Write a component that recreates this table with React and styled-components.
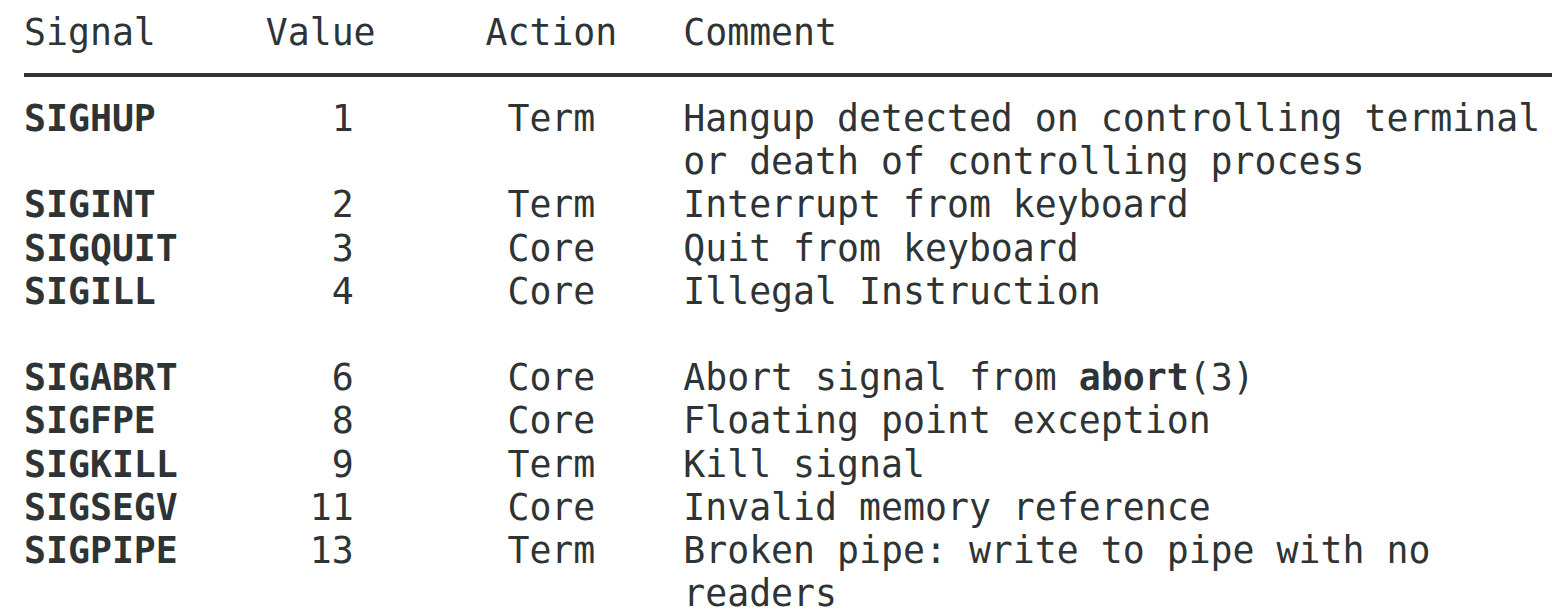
import React from 'react';
import styled, { createGlobalStyle } from 'styled-components';

const GlobalStyle = createGlobalStyle`
  html, body {
    margin: 0;
    padding: 0;
    background: #ffffff;
  }
`;

const Page = styled.div`
  padding: 11px 0 0 24px;
  width: 1528px;
  overflow: hidden;
  font-family: 'DejaVu Sans Mono', 'Liberation Mono', monospace;
  font-size: 36.5px;
  line-height: 43.2px;
  color: #2e3436;
`;

const Table = styled.div`
  display: grid;
  grid-template-columns: 11ch 10ch 9ch 1fr;
`;

const Head = styled.div`
  white-space: pre;
`;

const Rule = styled.div`
  grid-column: 1 / -1;
  height: 4px;
  background: #2e3436;
  margin: 18.4px 0 20.4px;
`;

const Name = styled.div`
  font-weight: bold;
  white-space: pre;
`;

const Value = styled.div`
  text-align: right;
  padding-right: 6ch;
`;

const Action = styled.div`
  text-align: center;
  width: 6ch;
`;

const Comment = styled.div`
  b {
    font-weight: bold;
  }
`;

const Blank = styled.div`
  grid-column: 1 / -1;
  height: 43.2px;
`;

const signals = [
  ['SIGHUP', '1', 'Term', 'Hangup detected on controlling terminal or death of controlling process'],
  ['SIGINT', '2', 'Term', 'Interrupt from keyboard'],
  ['SIGQUIT', '3', 'Core', 'Quit from keyboard'],
  ['SIGILL', '4', 'Core', 'Illegal Instruction'],
  null,
  ['SIGABRT', '6', 'Core', <>Abort signal from <b>abort</b>(3)</>],
  ['SIGFPE', '8', 'Core', 'Floating point exception'],
  ['SIGKILL', '9', 'Term', 'Kill signal'],
  ['SIGSEGV', '11', 'Core', 'Invalid memory reference'],
  ['SIGPIPE', '13', 'Term', 'Broken pipe: write to pipe with no readers'],
];

export default function App() {
  return (
    <>
      <GlobalStyle />
      <Page>
        <Table>
          <Head>Signal</Head>
          <Head>Value</Head>
          <Head>Action</Head>
          <Head>Comment</Head>
          <Rule />
          {signals.map((s, i) =>
            s === null ? (
              <Blank key={i} />
            ) : (
              <React.Fragment key={i}>
                <Name>{s[0]}</Name>
                <Value>{s[1]}</Value>
                <Action>{s[2]}</Action>
                <Comment>{s[3]}</Comment>
              </React.Fragment>
            )
          )}
        </Table>
      </Page>
    </>
  );
}
